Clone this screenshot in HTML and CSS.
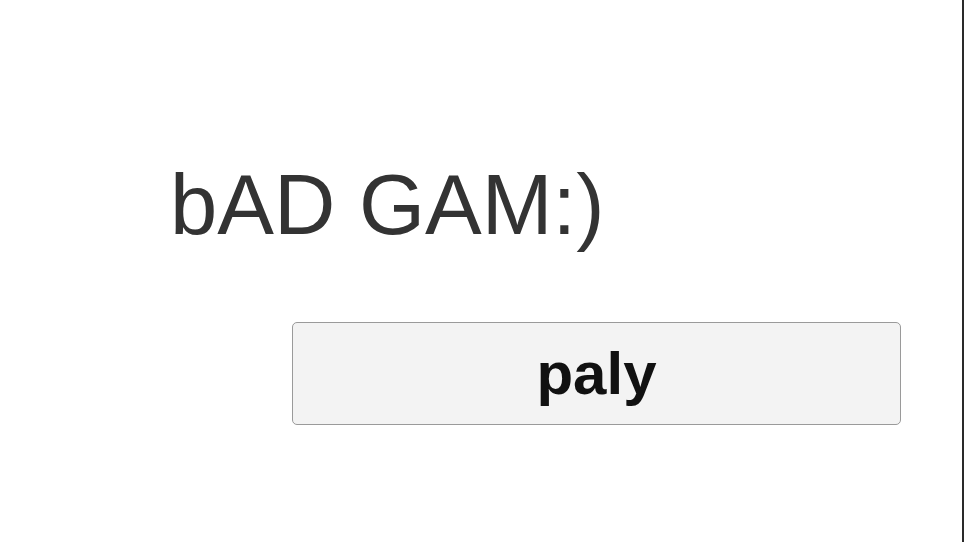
FILE: index.html
```html
<!DOCTYPE html>
<html>
<head>
<meta charset="utf-8">
<link rel="stylesheet" href="styles.css">
</head>
<body>
<div class="page">
  <h1 class="title">bAD GAM:)</h1>
  <div class="actions">
    <button class="play">paly</button>
  </div>
</div>
</body>
</html>
```

FILE: styles.css
```css
html, body {
  margin: 0;
  padding: 0;
  background: #ffffff;
}
.page {
  box-sizing: border-box;
  width: 964px;
  height: 542px;
  border-right: 2px solid #2a2a2a;
  padding-top: 162px;
  padding-left: 170px;
  font-family: "Liberation Sans", Arial, sans-serif;
  overflow: hidden;
}
.title {
  margin: 0;
  font-size: 85px;
  line-height: 1;
  font-weight: normal;
  color: #333333;
}
.actions {
  margin-top: 75px;
  padding-left: 122px;
}
.play {
  box-sizing: border-box;
  width: 609px;
  height: 103px;
  background: #f3f3f3;
  border: 1px solid #9a9a9a;
  border-radius: 5px;
  font-family: "Liberation Sans", Arial, sans-serif;
  font-weight: bold;
  font-size: 60px;
  line-height: 1;
  color: #111111;
  padding: 0;
  display: flex;
  align-items: center;
  justify-content: center;
}
```
